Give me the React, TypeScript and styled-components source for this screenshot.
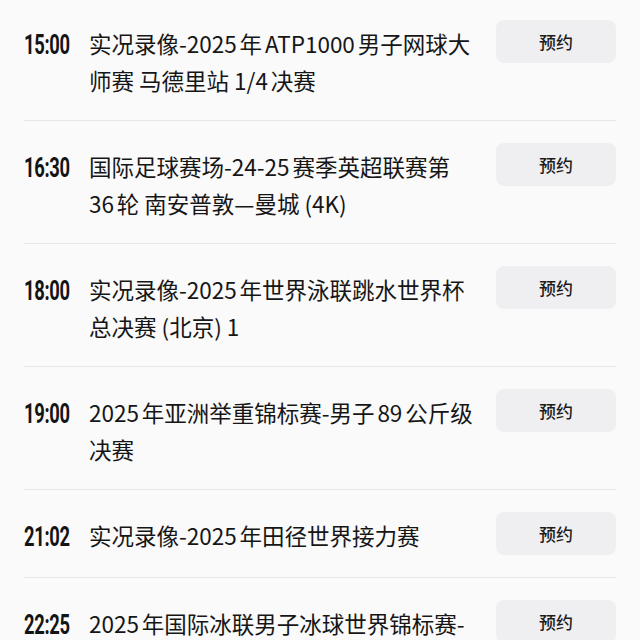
import styled, { createGlobalStyle } from 'styled-components';

const GlobalStyle = createGlobalStyle`
  html, body {
    margin: 0;
    padding: 0;
    background: #fafafa;
  }
  body {
    font-family: 'Noto Sans CJK SC', 'Noto Sans', sans-serif;
    color: #161616;
  }
`;

type Program = { time: string; lines: string[] };

// 标题按参考图手动分行
const programs: Program[] = [
  { time: '15:00', lines: ['实况录像-2025年ATP1000男子网球大', '师赛 马德里站 1/4决赛'] },
  { time: '16:30', lines: ['国际足球赛场-24-25赛季英超联赛第', '36轮 南安普敦—曼城 (4K)'] },
  { time: '18:00', lines: ['实况录像-2025年世界泳联跳水世界杯', '总决赛 (北京) 1'] },
  { time: '19:00', lines: ['2025年亚洲举重锦标赛-男子89公斤级', '决赛'] },
  { time: '21:02', lines: ['实况录像-2025年田径世界接力赛'] },
  { time: '22:25', lines: ['2025年国际冰联男子冰球世界锦标赛-'] },
];

const Page = styled.div`
  width: 640px;
  height: 640px;
  overflow: hidden;
  background: #fafafa;
`;

const List = styled.ul`
  list-style: none;
  margin: 0;
  padding: 0;
`;

const Row = styled.li`
  display: flex;
  align-items: flex-start;
  margin: 0 24px;
  padding: 23px 0 22px;
  border-bottom: 1px solid #e6e6e8;

  &:first-child {
    padding-top: 21px;
  }
`;

const TimeCell = styled.div`
  width: 65px;
  flex-shrink: 0;
  margin-top: 4px;
  height: 36.5px;
  line-height: 36.5px;
`;

const TimeText = styled.span`
  display: inline-block;
  position: relative;
  top: 2px;
  font-family: Roboto, 'DejaVu Sans Condensed', sans-serif;
  font-weight: 700;
  font-size: 27px;
  letter-spacing: -0.5px;
  color: #141414;
  transform: scaleX(0.68);
  transform-origin: left center;
`;

const Title = styled.div`
  flex: 1;
  margin-top: 4px;
  font-size: 22.5px;
  line-height: 36.5px;
  color: #161616;
  text-autospace: normal;
`;

const Line = styled.div`
  white-space: nowrap;
`;

const ReserveButton = styled.button`
  flex-shrink: 0;
  width: 120px;
  height: 43px;
  margin-top: -1px;
  border: none;
  border-radius: 8px;
  background: #efeff1;
  font-family: 'Noto Sans CJK SC', sans-serif;
  font-size: 17px;
  font-weight: 500;
  color: #1c1c1c;
  cursor: pointer;
`;

export default function App() {
  return (
    <Page>
      <GlobalStyle />
      <List>
        {programs.map((p) => (
          <Row key={p.time}>
            <TimeCell>
              <TimeText>{p.time}</TimeText>
            </TimeCell>
            <Title>
              {p.lines.map((l) => (
                <Line key={l}>{l}</Line>
              ))}
            </Title>
            <ReserveButton>预约</ReserveButton>
          </Row>
        ))}
      </List>
    </Page>
  );
}
